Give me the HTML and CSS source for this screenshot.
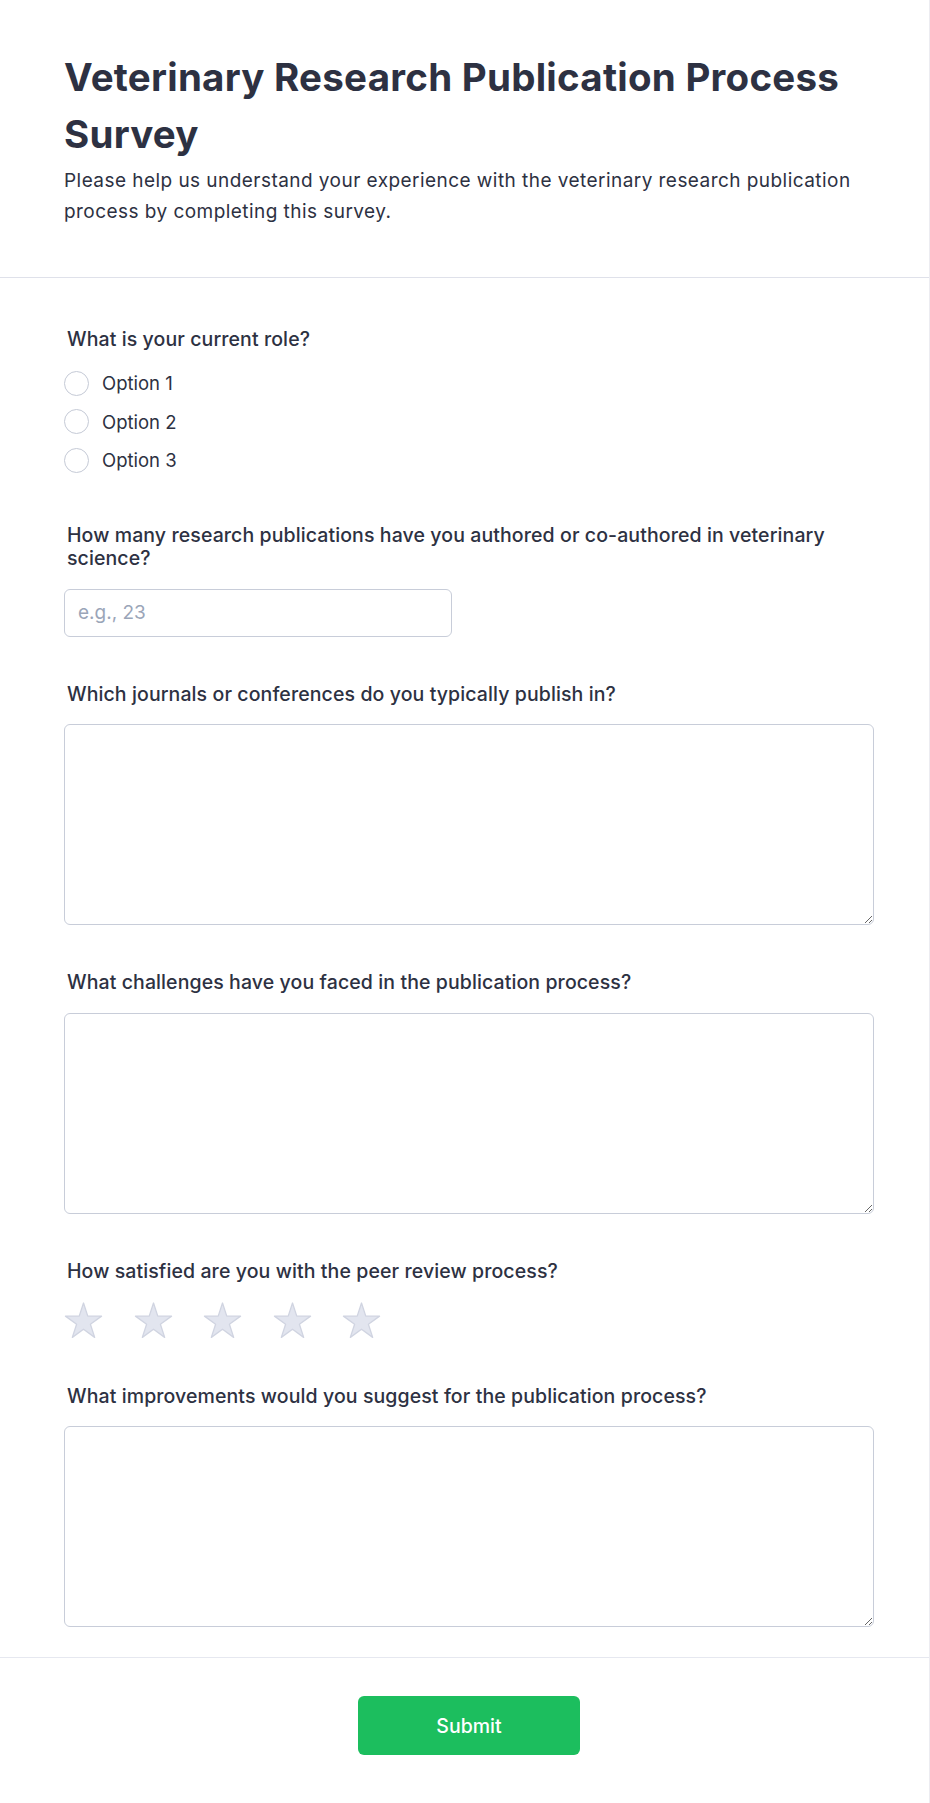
FILE: index.html
```html
<!DOCTYPE html>
<html lang="en">
<head>
<meta charset="utf-8">
<title>Veterinary Research Publication Process Survey</title>
<link rel="stylesheet" href="styles.css">
</head>
<body>
<div class="page">
  <header class="header">
    <h1 class="title">Veterinary Research Publication Process Survey</h1>
    <p class="intro">Please help us understand your experience with the veterinary research publication process by completing this survey.</p>
  </header>
  <form class="form">
    <div class="question q-radio">
      <div class="label">What is your current role?</div>
      <div class="options">
        <label class="option"><input type="radio" name="role" class="radio"><span>Option 1</span></label>
        <label class="option"><input type="radio" name="role" class="radio"><span>Option 2</span></label>
        <label class="option"><input type="radio" name="role" class="radio"><span>Option 3</span></label>
      </div>
    </div>
    <div class="question">
      <div class="label">How many research publications have you authored or co-authored in veterinary science?</div>
      <input type="text" class="text-input" placeholder="e.g., 23">
    </div>
    <div class="question">
      <div class="label">Which journals or conferences do you typically publish in?</div>
      <textarea class="textarea"></textarea>
    </div>
    <div class="question">
      <div class="label">What challenges have you faced in the publication process?</div>
      <textarea class="textarea"></textarea>
    </div>
    <div class="question">
      <div class="label">How satisfied are you with the peer review process?</div>
      <div class="stars">
        <svg class="star" viewBox="0 0 40 38" width="40" height="38"><polygon points="19.5,2 23.77,15.13 37.57,15.13 26.4,23.24 30.67,36.37 19.5,28.26 8.33,36.37 12.6,23.24 1.43,15.13 15.23,15.13"/></svg>
        <svg class="star" viewBox="0 0 40 38" width="40" height="38"><polygon points="19.5,2 23.77,15.13 37.57,15.13 26.4,23.24 30.67,36.37 19.5,28.26 8.33,36.37 12.6,23.24 1.43,15.13 15.23,15.13"/></svg>
        <svg class="star" viewBox="0 0 40 38" width="40" height="38"><polygon points="19.5,2 23.77,15.13 37.57,15.13 26.4,23.24 30.67,36.37 19.5,28.26 8.33,36.37 12.6,23.24 1.43,15.13 15.23,15.13"/></svg>
        <svg class="star" viewBox="0 0 40 38" width="40" height="38"><polygon points="19.5,2 23.77,15.13 37.57,15.13 26.4,23.24 30.67,36.37 19.5,28.26 8.33,36.37 12.6,23.24 1.43,15.13 15.23,15.13"/></svg>
        <svg class="star" viewBox="0 0 40 38" width="40" height="38"><polygon points="19.5,2 23.77,15.13 37.57,15.13 26.4,23.24 30.67,36.37 19.5,28.26 8.33,36.37 12.6,23.24 1.43,15.13 15.23,15.13"/></svg>
      </div>
    </div>
    <div class="question last">
      <div class="label">What improvements would you suggest for the publication process?</div>
      <textarea class="textarea"></textarea>
    </div>
  </form>
  <footer class="footer">
    <button type="button" class="submit">Submit</button>
  </footer>
</div>
</body>
</html>
```

FILE: styles.css
```css
* { box-sizing: border-box; }

html, body {
  margin: 0;
  padding: 0;
  background: #ffffff;
}

body {
  font-family: Inter, "Noto Sans", "Liberation Sans", sans-serif;
  color: #2d3142;
}

.page {
  width: 930px;
  border-right: 1px solid #ececf1;
  min-height: 1803px;
}

.header {
  padding: 49px 55px 50px 64px;
  border-bottom: 1px solid #dfe1ea;
}

.title {
  margin: 0;
  font-size: 38.5px;
  line-height: 57px;
  font-weight: 700;
  letter-spacing: 0.25px;
  color: #2d3142;
}

.intro {
  margin: 2px 0 0;
  font-size: 19px;
  line-height: 31px;
  font-weight: 400;
  letter-spacing: 0.45px;
  color: #2d3142;
}

.form {
  padding: 50px 55px 30px 64px;
  border-bottom: 1px solid #e6e8f0;
}

.question {
  margin-bottom: 46px;
}

.question.last {
  margin-bottom: 0;
}

.q-radio {
  margin-bottom: 49.5px;
}

.label {
  font-size: 19.5px;
  line-height: 23.4px;
  font-weight: 500;
  letter-spacing: 0.1px;
  color: #2d3142;
  margin: 0 0 18px 3px;
}

.options {
  display: flex;
  flex-direction: column;
  gap: 10.5px;
}

.option {
  display: flex;
  align-items: center;
  gap: 13px;
  height: 28px;
  font-size: 18.5px;
  color: #2d3142;
}

.radio {
  appearance: none;
  -webkit-appearance: none;
  margin: 0;
  width: 25px;
  height: 25px;
  border-radius: 50%;
  border: 1.5px solid #c5cad6;
  background: #ffffff;
  flex: none;
}

.text-input {
  display: block;
  width: 388px;
  height: 48px;
  border: 1px solid #c8cdd9;
  border-radius: 6px;
  padding: 0 13px;
  font-family: inherit;
  font-size: 19px;
  color: #2d3142;
  background: #ffffff;
}

.text-input::placeholder {
  color: #9aa5b8;
}

.textarea {
  display: block;
  width: 100%;
  height: 201px;
  border: 1px solid #c8cdd9;
  border-radius: 6px;
  padding: 12px;
  font-family: inherit;
  font-size: 18px;
  background: #ffffff;
  resize: vertical;
}

.stars {
  display: flex;
  gap: 29.5px;
  height: 38px;
}

.star {
  display: block;
  fill: #e2e5ef;
  stroke: #d0d4e1;
  stroke-width: 1.3;
  stroke-linejoin: round;
}

.footer {
  display: flex;
  justify-content: center;
  padding: 38px 55px 50px 64px;
}

.submit {
  width: 222px;
  height: 59px;
  border: none;
  border-radius: 6px;
  background: #1cbe5e;
  color: #ffffff;
  font-family: inherit;
  font-size: 19.5px;
  font-weight: 500;
  cursor: pointer;
}
```
